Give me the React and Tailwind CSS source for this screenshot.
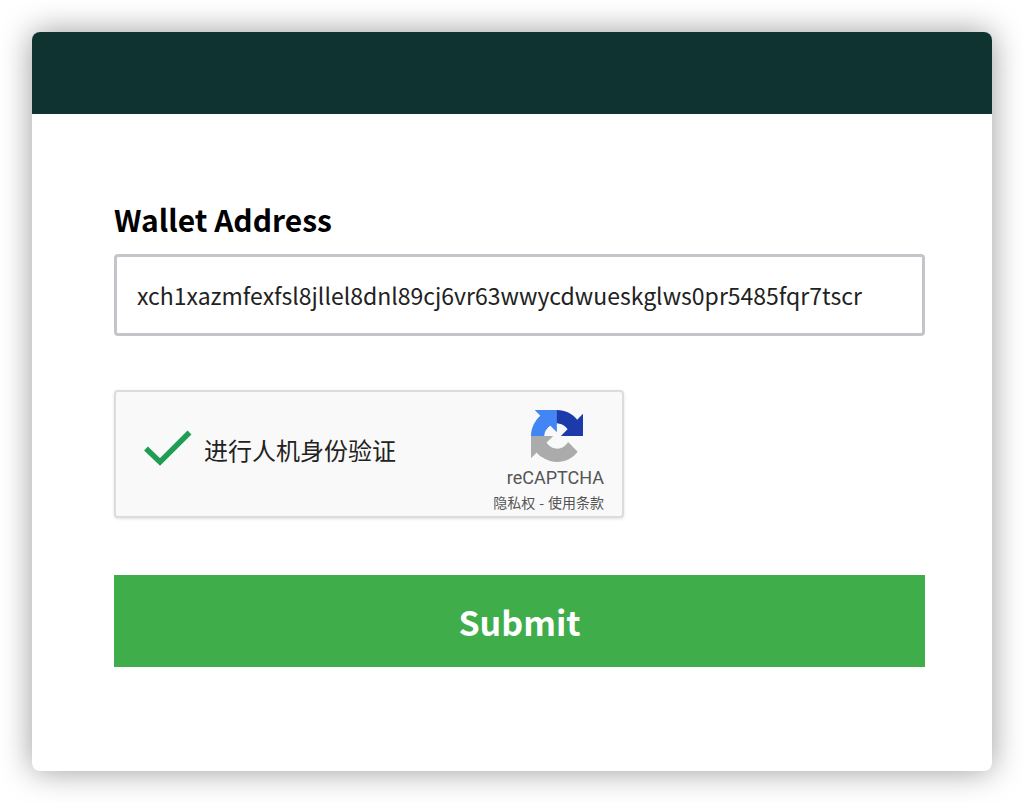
function CheckMark() {
  return (
    <svg viewBox="0 0 48 36" className="pointer-events-none col-start-1 row-start-1 h-9 w-12" aria-hidden="true">
      <path d="M2 18.5 L16 32 L45.5 2.5" fill="none" stroke="#1f9d55" strokeWidth="5.5" />
    </svg>
  );
}

function RecaptchaLogo() {
  return (
    <svg viewBox="0 0 64 64" className="size-[52px]" aria-hidden="true">
      <path
        fill="#1c3aa9"
        d="M64 31.955l-.033-1.37V4.687l-7.16 7.16C50.948 4.674 42.033.093 32.05.093c-10.4 0-19.622 4.96-25.458 12.64l11.736 11.86a15.55 15.55 0 0 1 4.754-5.334c2.05-1.6 4.952-2.906 8.968-2.906.485 0 .86.057 1.135.163 4.976.393 9.288 3.14 11.828 7.124l-8.307 8.307L64 31.953"
      />
      <path
        fill="#4285f4"
        d="M31.862.094l-1.37.033H4.594l7.16 7.16C4.58 13.147 0 22.06 0 32.046c0 10.4 4.96 19.622 12.64 25.458L24.5 45.768a15.55 15.55 0 0 1-5.334-4.754c-1.6-2.05-2.906-4.952-2.906-8.968 0-.485.057-.86.163-1.135.393-4.976 3.14-9.288 7.124-11.828l8.307 8.307L31.86.095"
      />
      <path
        fill="#ababab"
        d="M.001 32.045l.033 1.37v25.898l7.16-7.16c5.86 7.173 14.774 11.754 24.76 11.754 10.4 0 19.622-4.96 25.458-12.64l-11.736-11.86a15.55 15.55 0 0 1-4.754 5.334c-2.05 1.6-4.952 2.906-8.968 2.906-.485 0-.86-.057-1.135-.163-4.976-.393-9.288-3.14-11.828-7.124l8.307-8.307c-10.522.04-22.4.066-27.295-.005"
      />
    </svg>
  );
}

export default function App() {
  return (
    <div className="min-h-screen bg-white p-8 font-['Noto_Sans_CJK_SC',sans-serif] text-black">
      <main className="overflow-hidden rounded-lg bg-white shadow-[0_0_32px_rgba(0,0,0,0.4)]">
        <header className="h-[82px] bg-[#0f3331]" />
        <form className="pt-[84px] pr-[67px] pb-[104px] pl-[82px]" onSubmit={(e) => e.preventDefault()}>
          <label htmlFor="wallet" className="block text-[30px] leading-[42px] font-bold">
            Wallet Address
          </label>
          <input
            id="wallet"
            type="text"
            defaultValue="xch1xazmfexfsl8jllel8dnl89cj6vr63wwycdwueskglws0pr5485fqr7tscr"
            className="mt-[14px] block h-[82px] w-full rounded-[4px] border-[3px] border-[#c4c4ca] bg-white px-5 text-[23px] text-[#222] outline-none"
          />

          <div className="mt-[54px] flex h-32 w-full max-w-[510px] items-center justify-between rounded-[4px] border-2 border-[#dcdcdc] bg-[#f9f9f9] pr-[18px] pl-7 shadow-[0_1px_3px_rgba(0,0,0,0.12)]">
            <div className="flex items-start gap-3 pb-2">
              <span className="grid place-items-center">
                <input
                  id="human"
                  type="checkbox"
                  defaultChecked
                  className="col-start-1 row-start-1 h-9 w-12 appearance-none outline-none"
                />
                <CheckMark />
              </span>
              <label htmlFor="human" className="text-2xl leading-10 text-[#222]">
                进行人机身份验证
              </label>
            </div>
            <div className="flex flex-col items-end pt-4 text-[#555]">
              <div className="mr-[21px]">
                <RecaptchaLogo />
              </div>
              <div className="mt-1 font-[Roboto,sans-serif] text-lg leading-6">reCAPTCHA</div>
              <div className="flex gap-1 text-sm leading-6">
                <a href="#privacy">隐私权</a>
                <span>-</span>
                <a href="#terms">使用条款</a>
              </div>
            </div>
          </div>

          <button type="submit" className="mt-[57px] block h-[92px] w-full bg-[#40ad4b] text-[34px] font-bold text-white">
            Submit
          </button>
        </form>
      </main>
    </div>
  );
}
